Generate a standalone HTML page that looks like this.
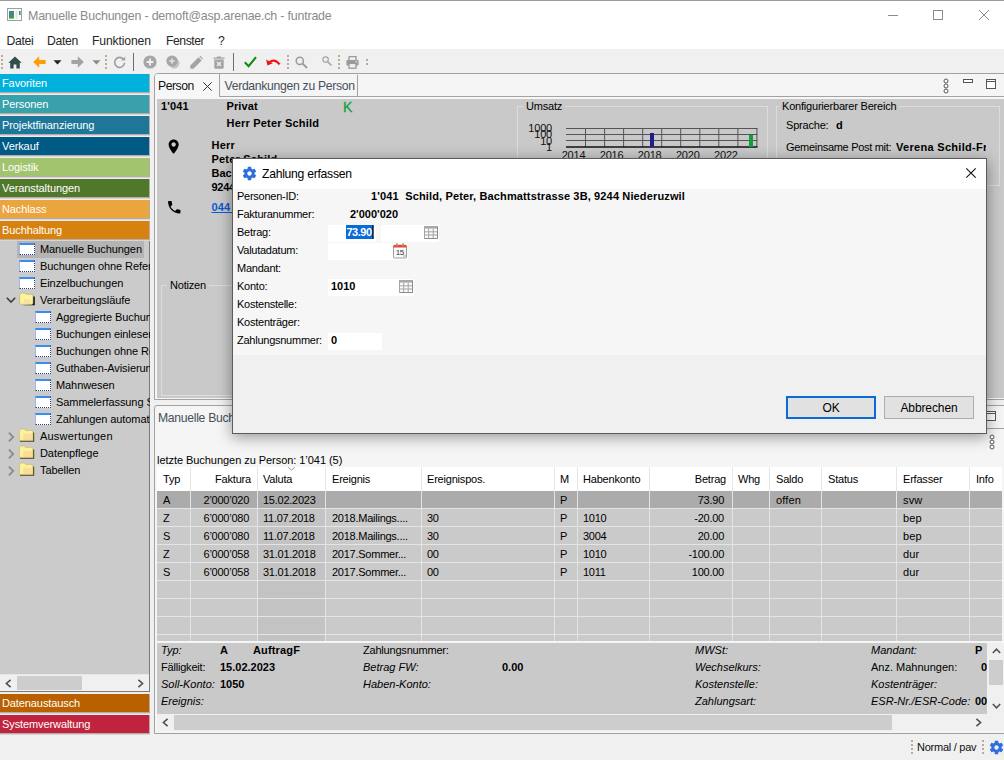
<!DOCTYPE html>
<html lang="de">
<head>
<meta charset="utf-8">
<title>Manuelle Buchungen - demoft@asp.arenae.ch - funtrade</title>
<style>
*{box-sizing:border-box;margin:0;padding:0}
html,body{width:1004px;height:760px;overflow:hidden;background:#f0f0f0}
body{position:relative;font-family:"Liberation Sans",sans-serif;font-size:11px;color:#000;line-height:14px;letter-spacing:-.2px}
.a{position:absolute;white-space:nowrap}
.b{font-weight:bold;letter-spacing:.15px}
.i{font-style:italic;letter-spacing:0}
.i0{letter-spacing:0}
.sg{font-family:"Liberation Sans",sans-serif}
svg{position:absolute;overflow:visible}
#title{left:0;top:0;width:1004px;height:31px;background:#fff;border-top:1px solid #9c9c9c}
#menubar{left:0;top:31px;width:1004px;height:18px;background:#fff}
#toolbar{left:0;top:49px;width:1004px;height:24px;background:#f0f0f0}
#side{left:0;top:73px;width:150px;height:662px;background:#eeeeee;overflow:hidden}
.bar{position:absolute;left:0;width:149px;height:18px;color:#fff;font-size:11px;line-height:14px;padding:2px 0 0 2px;white-space:nowrap;letter-spacing:-.1px}
.barsh{position:absolute;left:0;width:150px;height:3px;border-top:1px solid #b9aca7;background:linear-gradient(#d6d6d6 0,#d6d6d6 1px,#f2ecec 1px,#f2ecec 2px)}
.ti{position:absolute;font-size:11px;white-space:nowrap;height:17px;line-height:17px;letter-spacing:-.08px}
.wi{position:absolute;width:16px;height:12px;background:#fff;border-top:2px solid #3a8cf0;border-left:1px solid #9ab8ea;border-right:1px dotted #2a3a8a;border-bottom:1px dotted #2a3a8a}
.hd{position:absolute;width:2px}
</style>
</head>
<body>
<div id="title" class="a">
<svg style="left:7px;top:7px" width="15" height="13" viewBox="0 0 15 13"><defs><linearGradient id="tg" x1="0" y1="0" x2="0.4" y2="1"><stop offset="0" stop-color="#4a78b4"/><stop offset="1" stop-color="#38a048"/></linearGradient></defs><rect x="0.5" y="0.5" width="14" height="12" fill="#fbfbfb" stroke="#9aa0a8"/><rect x="2" y="3" width="5" height="7.6" fill="url(#tg)"/><rect x="8.6" y="3" width="1.8" height="7.6" fill="#e2e2e2"/><rect x="12" y="3" width="1.6" height="4" fill="url(#tg)"/></svg>
<div class="a sg" style="left:28px;top:7px;font-size:12.4px;line-height:16px;color:#8a8a8a;letter-spacing:-.18px">Manuelle Buchungen - demoft@asp.arenae.ch - funtrade</div>
<svg style="left:888px;top:14px" width="10" height="1"><rect x="0" y="0" width="10" height="1" fill="#8c8c8c"/></svg>
<svg style="left:933px;top:9px" width="10" height="10"><rect x="0.5" y="0.5" width="9" height="9" fill="none" stroke="#8c8c8c"/></svg>
<svg style="left:979px;top:9px" width="10" height="10"><path d="M0 0L10 10M10 0L0 10" stroke="#8c8c8c" stroke-width="1" fill="none"/></svg>
</div>
<div id="menubar" class="a sg" style="font-size:12.2px;line-height:19px;color:#262626;letter-spacing:-.15px">
<span class="a" style="left:6.5px;top:1px;letter-spacing:-.3px">Datei</span><span class="a" style="left:47px;top:1px;letter-spacing:-.3px">Daten</span><span class="a" style="left:92px;top:1px">Funktionen</span><span class="a" style="left:166px;top:1px;letter-spacing:-.45px">Fenster</span><span class="a" style="left:218px;top:1px">?</span>
</div>
<div id="toolbar" class="a"></div><div class="a" style="left:1px;top:55px;width:2px;height:2px;background:#bcab90"></div><div class="a" style="left:1px;top:59px;width:2px;height:2px;background:#bcab90"></div><div class="a" style="left:1px;top:63px;width:2px;height:2px;background:#bcab90"></div><div class="a" style="left:1px;top:67px;width:2px;height:2px;background:#bcab90"></div><div class="a" style="left:105px;top:55px;width:2px;height:2px;background:#bcab90"></div><div class="a" style="left:105px;top:59px;width:2px;height:2px;background:#bcab90"></div><div class="a" style="left:105px;top:63px;width:2px;height:2px;background:#bcab90"></div><div class="a" style="left:105px;top:67px;width:2px;height:2px;background:#bcab90"></div><div class="a" style="left:287px;top:55px;width:2px;height:2px;background:#bcab90"></div><div class="a" style="left:287px;top:59px;width:2px;height:2px;background:#bcab90"></div><div class="a" style="left:287px;top:63px;width:2px;height:2px;background:#bcab90"></div><div class="a" style="left:287px;top:67px;width:2px;height:2px;background:#bcab90"></div><div class="a" style="left:338px;top:55px;width:2px;height:2px;background:#bcab90"></div><div class="a" style="left:338px;top:59px;width:2px;height:2px;background:#bcab90"></div><div class="a" style="left:338px;top:63px;width:2px;height:2px;background:#bcab90"></div><div class="a" style="left:338px;top:67px;width:2px;height:2px;background:#bcab90"></div><div class="a" style="left:366px;top:59px;width:2px;height:2px;background:#bcab90"></div><div class="a" style="left:366px;top:63px;width:2px;height:2px;background:#bcab90"></div>
<svg style="left:8px;top:56px" width="14" height="13" viewBox="0 0 14 13"><path d="M7 0.5L0.3 6.8H2.2V12.5H5.6V8.4H8.4V12.5H11.8V6.8H13.7Z" fill="#2f4f4f"/></svg>
<svg style="left:33px;top:56px" width="13" height="12" viewBox="0 0 13 12"><path d="M6.2 0.3L0.2 6L6.2 11.7V8H12.6V4H6.2Z" fill="#ff9c0a"/></svg>
<svg style="left:53px;top:60px" width="9" height="5" viewBox="0 0 9 5"><path d="M0.5 0.3H8.5L4.5 4.6Z" fill="#222"/></svg>
<svg style="left:71px;top:56px" width="13" height="12" viewBox="0 0 13 12"><path d="M6.8 0.3L12.8 6L6.8 11.7V8H0.4V4H6.8Z" fill="#a3a3a3"/></svg>
<svg style="left:92px;top:60px" width="9" height="5" viewBox="0 0 9 5"><path d="M0.5 0.3H8.5L4.5 4.6Z" fill="#8c8c8c"/></svg>
<svg style="left:113px;top:56px" width="13" height="13" viewBox="0 0 13 13"><path d="M10.6 3.4A5 5 0 1 0 11.6 6.8" fill="none" stroke="#a0a0a0" stroke-width="1.7"/><path d="M8.2 4.6H12.2V0.6Z" fill="#a0a0a0"/></svg>
<div class="a" style="left:133px;top:53px;width:1px;height:18px;background:#6e6e6e"></div>
<svg style="left:143px;top:55px" width="14" height="14" viewBox="0 0 14 14"><circle cx="7" cy="7" r="6.6" fill="#a6a6a6"/><path d="M7 3.6V10.4M3.6 7H10.4" stroke="#f0f0f0" stroke-width="1.8"/></svg>
<svg style="left:166px;top:55px" width="14" height="14" viewBox="0 0 14 14"><circle cx="8.2" cy="8.2" r="5.2" fill="#c4c4c4"/><circle cx="6" cy="6" r="5.6" fill="#a6a6a6"/><path d="M6 3.2V8.8M3.2 6H8.8" stroke="#e4e4e4" stroke-width="1.4"/></svg>
<svg style="left:190px;top:56px" width="13" height="13" viewBox="0 0 13 13"><path d="M0.3 12.7V9.6L8.6 1.3L11.7 4.4L3.4 12.7Z" fill="#a3a3a3"/><path d="M9.5 0.6L10.4 -0.2L13 2.4L12.3 3.4Z" fill="#a3a3a3"/></svg>
<svg style="left:213px;top:56px" width="12" height="13" viewBox="0 0 12 13"><path d="M0.4 1.4H3.6L4.3 0.4H7.7L8.4 1.4H11.6V2.8H0.4Z" fill="#a3a3a3"/><path d="M1.3 3.6H10.7V11.6Q10.7 12.8 9.5 12.8H2.5Q1.3 12.8 1.3 11.6Z" fill="#a3a3a3"/><path d="M4 6L8 10M8 6L4 10" stroke="#f0f0f0" stroke-width="1.3"/></svg>
<div class="a" style="left:233px;top:53px;width:1px;height:18px;background:#6e6e6e"></div>
<svg style="left:244px;top:56px" width="13" height="12" viewBox="0 0 13 12"><path d="M0.8 6.2L4.6 10.2L12 1.2" fill="none" stroke="#0a8a0a" stroke-width="2"/></svg>
<svg style="left:266px;top:58px" width="15" height="9" viewBox="0 0 15 9"><path d="M3.4 4.2Q8.6 0.2 13.6 6.4" fill="none" stroke="#f01414" stroke-width="2.2"/><path d="M0.2 1.6L1.4 7.4L6.8 5.2Z" fill="#f01414"/></svg>
<svg style="left:295px;top:56px" width="13" height="13" viewBox="0 0 13 13"><circle cx="4.8" cy="4.8" r="3.6" fill="none" stroke="#9a9a9a" stroke-width="1.5"/><path d="M7.4 7.4L12 12" stroke="#9a9a9a" stroke-width="1.8"/></svg>
<svg style="left:322px;top:56px" width="10" height="10" viewBox="0 0 10 10"><circle cx="3.6" cy="3.6" r="2.7" fill="none" stroke="#a6a6a6" stroke-width="1.2"/><path d="M5.6 5.6L9.4 9.4" stroke="#a6a6a6" stroke-width="1.5"/></svg>
<svg style="left:346px;top:56px" width="13" height="13" viewBox="0 0 13 13"><path d="M3 0.6H10V4" fill="none" stroke="#9a9a9a" stroke-width="1.4"/><path d="M3 4V0.6" stroke="#9a9a9a" stroke-width="1.4"/><rect x="0.4" y="4" width="12.2" height="5.6" rx="1" fill="#9a9a9a"/><rect x="3" y="7.4" width="7" height="4.8" fill="#f0f0f0" stroke="#9a9a9a" stroke-width="1.3"/><rect x="9.6" y="5.2" width="1.6" height="1.1" fill="#f0f0f0"/></svg>
<div id="side" class="a"><div class="bar" style="top:1px;background:#00b1dd">Favoriten</div><div class="barsh" style="top:19px"></div><div class="a" style="left:149px;top:1px;width:1px;height:18px;background:#b4aca6"></div><div class="bar" style="top:22px;background:#38a1ac">Personen</div><div class="barsh" style="top:40px"></div><div class="a" style="left:149px;top:22px;width:1px;height:18px;background:#b4aca6"></div><div class="bar" style="top:43px;background:#1e7799">Projektfinanzierung</div><div class="barsh" style="top:61px"></div><div class="a" style="left:149px;top:43px;width:1px;height:18px;background:#b4aca6"></div><div class="bar" style="top:64px;background:#005b84">Verkauf</div><div class="barsh" style="top:82px"></div><div class="a" style="left:149px;top:64px;width:1px;height:18px;background:#b4aca6"></div><div class="bar" style="top:85px;background:#a2c46e">Logistik</div><div class="barsh" style="top:103px"></div><div class="a" style="left:149px;top:85px;width:1px;height:18px;background:#b4aca6"></div><div class="bar" style="top:106px;background:#50782a">Veranstaltungen</div><div class="barsh" style="top:124px"></div><div class="a" style="left:149px;top:106px;width:1px;height:18px;background:#b4aca6"></div><div class="bar" style="top:127px;background:#eaa53e">Nachlass</div><div class="barsh" style="top:145px"></div><div class="a" style="left:149px;top:127px;width:1px;height:18px;background:#b4aca6"></div><div class="bar" style="top:148px;background:#d7820f">Buchhaltung</div><div class="barsh" style="top:166px"></div><div class="a" style="left:149px;top:148px;width:1px;height:18px;background:#b4aca6"></div><div class="bar" style="top:621px;background:#b96000">Datenaustausch</div><div class="barsh" style="top:639px"></div><div class="a" style="left:149px;top:621px;width:1px;height:18px;background:#b4aca6"></div><div class="bar" style="top:642px;background:#bf233d">Systemverwaltung</div><div class="barsh" style="top:660px"></div><div class="a" style="left:149px;top:642px;width:1px;height:18px;background:#b4aca6"></div><div class="a" style="left:0;top:168px;width:150px;height:451px;background:#cbcbcb;border-right:1px solid #7c7c7c"></div><div class="a" style="left:17px;top:168px;width:127px;height:17px;background:#b4b4b4"></div><div class="wi" style="left:19px;top:170px"></div><div class="ti" style="left:40px;top:168px">Manuelle Buchungen</div><div class="wi" style="left:19px;top:187px"></div><div class="ti" style="left:40px;top:185px">Buchungen ohne Referenz</div><div class="wi" style="left:19px;top:204px"></div><div class="ti" style="left:40px;top:202px">Einzelbuchungen</div><svg style="left:19px;top:219px" width="17" height="15" viewBox="0 0 17 15"><path d="M3.5 13.2H15.8V4.6H14V12Z" fill="#111"/><path d="M0.6 3.2Q0.6 1.2 2.6 1Q5.4 0.4 7.4 2.2H12.4Q14 2.2 14 4V11Q14 12.4 12.6 12.4H2.4Q0.6 12.4 0.6 10.6Z" fill="#faf29c" stroke="#b8a850" stroke-width=".6"/><path d="M5 7.5H11.5V11.6H4Z" fill="#f6d8a0" opacity=".7"/></svg><svg style="left:6px;top:224px" width="10" height="6" viewBox="0 0 10 6"><path d="M0.8 0.8L5 5L9.2 0.8" fill="none" stroke="#404040" stroke-width="1.6"/></svg><div class="ti" style="left:40px;top:219px">Verarbeitungsläufe</div><div class="wi" style="left:35px;top:238px"></div><div class="ti" style="left:56px;top:236px">Aggregierte Buchungen</div><div class="wi" style="left:35px;top:255px"></div><div class="ti" style="left:56px;top:253px">Buchungen einlesen</div><div class="wi" style="left:35px;top:272px"></div><div class="ti" style="left:56px;top:270px">Buchungen ohne Referenz</div><div class="wi" style="left:35px;top:289px"></div><div class="ti" style="left:56px;top:287px">Guthaben-Avisierung</div><div class="wi" style="left:35px;top:306px"></div><div class="ti" style="left:56px;top:304px">Mahnwesen</div><div class="wi" style="left:35px;top:323px"></div><div class="ti" style="left:56px;top:321px">Sammelerfassung Spenden</div><div class="wi" style="left:35px;top:340px"></div><div class="ti" style="left:56px;top:338px">Zahlungen automatisch</div><svg style="left:19px;top:355px" width="15.4" height="13.6" viewBox="0 0 16 14"><path d="M1 13.5H15.2V4.5" fill="none" stroke="#4a4418" stroke-width="1.2"/><path d="M0.5 3.4Q0.5 1 2.6 1H4.8Q6.4 1 7 2.6H12.8Q14.4 2.6 14.4 4.2V12.8H0.5Z" fill="#fbf39c" stroke="#c8b850" stroke-width=".6"/><rect x="4.5" y="6" width="9" height="6.4" fill="#f8c49c" opacity=".45"/></svg><svg style="left:8px;top:359px" width="7" height="10" viewBox="0 0 7 10"><path d="M0.9 0.7L5.2 5L0.9 9.3" fill="none" stroke="#8c8c8c" stroke-width="1.8"/></svg><div class="ti" style="left:40px;top:355px;letter-spacing:.2px">Auswertungen</div><svg style="left:19px;top:372px" width="15.4" height="13.6" viewBox="0 0 16 14"><path d="M1 13.5H15.2V4.5" fill="none" stroke="#4a4418" stroke-width="1.2"/><path d="M0.5 3.4Q0.5 1 2.6 1H4.8Q6.4 1 7 2.6H12.8Q14.4 2.6 14.4 4.2V12.8H0.5Z" fill="#fbf39c" stroke="#c8b850" stroke-width=".6"/><rect x="4.5" y="6" width="9" height="6.4" fill="#f8c49c" opacity=".45"/></svg><svg style="left:8px;top:376px" width="7" height="10" viewBox="0 0 7 10"><path d="M0.9 0.7L5.2 5L0.9 9.3" fill="none" stroke="#8c8c8c" stroke-width="1.8"/></svg><div class="ti" style="left:40px;top:372px">Datenpflege</div><svg style="left:19px;top:389px" width="15.4" height="13.6" viewBox="0 0 16 14"><path d="M1 13.5H15.2V4.5" fill="none" stroke="#4a4418" stroke-width="1.2"/><path d="M0.5 3.4Q0.5 1 2.6 1H4.8Q6.4 1 7 2.6H12.8Q14.4 2.6 14.4 4.2V12.8H0.5Z" fill="#fbf39c" stroke="#c8b850" stroke-width=".6"/><rect x="4.5" y="6" width="9" height="6.4" fill="#f8c49c" opacity=".45"/></svg><svg style="left:8px;top:393px" width="7" height="10" viewBox="0 0 7 10"><path d="M0.9 0.7L5.2 5L0.9 9.3" fill="none" stroke="#8c8c8c" stroke-width="1.8"/></svg><div class="ti" style="left:40px;top:389px">Tabellen</div><div class="a" style="left:0;top:601px;width:149px;height:1px;background:#e6e6e6"></div>
<div class="a" style="left:0;top:602px;width:149px;height:16px;background:#f0f0f0"></div>
<div class="a" style="left:17px;top:603px;width:65px;height:14px;background:#cdcdcd"></div>
<svg style="left:5px;top:605.5px" width="7" height="9" viewBox="0 0 7 9"><path d="M5.6 0.8L1.4 4.5L5.6 8.2" fill="none" stroke="#505050" stroke-width="1.6"/></svg>
<svg style="left:137px;top:605.5px" width="7" height="9" viewBox="0 0 7 9"><path d="M1.4 0.8L5.6 4.5L1.4 8.2" fill="none" stroke="#505050" stroke-width="1.6"/></svg>
<div class="a" style="left:0;top:618px;width:150px;height:1px;background:#7a7a7a"></div>
</div>
<div class="a" style="left:154px;top:73px;width:860px;height:327px;background:#f5f5f5;border:1px solid #a2a2a2;border-radius:4px 0 0 0"></div>
<div class="a" style="left:219px;top:96px;width:785px;height:1px;background:#a2a2a2"></div>
<div class="a" style="left:155px;top:74px;width:65px;height:24px;background:#f7f7f7;border-right:1px solid #a2a2a2;border-radius:3px 0 0 0"></div>
<div class="a" style="left:155px;top:97px;width:849px;height:2px;background:#f6f6f6"></div>
<div class="a" style="left:155px;top:97px;width:2px;height:302px;background:#f6f6f6"></div>
<div class="a" style="left:357px;top:75px;width:1px;height:21px;background:#a2a2a2"></div>
<div class="a sg" style="left:158px;top:78px;font-size:12.2px;line-height:16px;color:#111;letter-spacing:-.45px">Person</div>
<svg style="left:203px;top:81.5px" width="9" height="9" viewBox="0 0 9 9"><path d="M0.3 0.3L8.7 8.7M8.7 0.3L0.3 8.7" stroke="#333" stroke-width="1" fill="none"/></svg>
<div class="a sg" style="left:224.5px;top:78px;font-size:12.2px;line-height:16px;color:#48505a;letter-spacing:-.3px">Verdankungen zu Person</div>
<svg style="left:942.5px;top:77.5px" width="6" height="16" viewBox="0 0 6 16"><circle cx="3" cy="3" r="2" fill="#fff" stroke="#555" stroke-width="1"/><circle cx="3" cy="8" r="2" fill="#fff" stroke="#555" stroke-width="1"/><circle cx="3" cy="13" r="2" fill="#fff" stroke="#555" stroke-width="1"/></svg>
<svg style="left:963px;top:79px" width="10" height="4"><rect x="0.5" y="0.5" width="9" height="3" fill="#fff" stroke="#555"/></svg>
<svg style="left:986px;top:79px" width="10" height="10"><rect x="0.5" y="0.5" width="9" height="9" fill="#fff" stroke="#555"/><rect x="0.5" y="2" width="9" height="1" fill="#555"/></svg>
<div class="a" style="left:157px;top:99px;width:847px;height:299px;background:#c9c9c9"></div>

<div class="a b" style="left:161px;top:99px">1'041</div>
<div class="a b" style="left:226.5px;top:99px;letter-spacing:.1px">Privat</div>
<div class="a" style="left:343px;top:98px;font-size:14px;line-height:18px;color:#12a040;-webkit-text-stroke:.3px #12a040">K</div>
<div class="a b" style="left:226.5px;top:116px;letter-spacing:.2px">Herr Peter Schild</div>
<svg style="left:165.3px;top:137.7px" width="17.3" height="17.3" viewBox="0 0 24 24"><path fill="#000" d="M12 2C8.13 2 5 5.13 5 9c0 5.25 7 13 7 13s7-7.750 7-13c0-3.870-3.130-7-7-7zm0 10c-1.650 0-3-1.350-3-3s1.350-3 3-3 3 1.350 3 3-1.350 3-3 3z"/></svg>
<div class="a b" style="left:211.5px;top:138px;letter-spacing:.2px">Herr</div>
<div class="a b" style="left:211.5px;top:152px;letter-spacing:.2px">Peter Schild</div>
<div class="a b" style="left:211.5px;top:166px;letter-spacing:0">Bachmattstrasse 3B</div>
<div class="a b" style="left:211.5px;top:180px;letter-spacing:-.25px">9244 Niederuzwil</div>
<svg style="left:165.6px;top:198.6px" width="16.5" height="16.5" viewBox="0 0 24 24"><path fill="#000" d="M6.620 10.790c1.440 2.830 3.760 5.140 6.590 6.590l2.200-2.200c.27-.27.67-.36 1.020-.24 1.120.37 2.330.57 3.570.57.55 0 1 .45 1 1V20c0 .55-.45 1-1 1-9.390 0-17-7.610-17-17 0-.55.45-1 1-1h3.500c.55 0 1 .45 1 1 0 1.250.2 2.450.57 3.570.11.35.03.74-.25 1.020l-2.200 2.200z"/></svg>
<div class="a b" style="left:211.5px;top:200px;color:#0a5ad2;text-decoration:underline">044 555 44 33</div>
<div class="a" style="left:517px;top:106px;width:251px;height:80px;border:1px solid #dcdcdc"></div><div class="a" style="left:523px;top:99px;padding:0 3px;background:#c9c9c9">Umsatz</div><div class="a" style="left:776px;top:106px;width:224px;height:80px;border:1px solid #dcdcdc"></div><div class="a" style="left:779px;top:99px;padding:0 3px;background:#c9c9c9">Konfigurierbarer Bereich</div><div class="a" style="left:161px;top:285px;width:330px;height:111px;border:1px solid #dcdcdc"></div><div class="a" style="left:167px;top:278px;padding:0 3px;background:#c9c9c9">Notizen</div><svg style="left:520px;top:118px" width="250" height="47" viewBox="520 118 250 47" font-family="Liberation Sans, sans-serif" font-size="11"><path d="M566 128.5H757.5" stroke="#555" stroke-width="1"/><path d="M566 134.5H757.5" stroke="#555" stroke-width="1"/><path d="M566 140.5H757.5" stroke="#555" stroke-width="1"/><path d="M585.5 128V147" stroke="#555" stroke-width="1"/><path d="M604.6 128V147" stroke="#555" stroke-width="1"/><path d="M623.6 128V147" stroke="#555" stroke-width="1"/><path d="M642.7 128V147" stroke="#555" stroke-width="1"/><path d="M661.7 128V147" stroke="#555" stroke-width="1"/><path d="M680.7 128V147" stroke="#555" stroke-width="1"/><path d="M699.8 128V147" stroke="#555" stroke-width="1"/><path d="M718.8 128V147" stroke="#555" stroke-width="1"/><path d="M737.9 128V147" stroke="#555" stroke-width="1"/><path d="M756.9 128V147" stroke="#555" stroke-width="1"/><path d="M566 147H757.5" stroke="#111" stroke-width="1.4"/><rect x="650" y="133" width="4" height="14" fill="#1e1e8c"/><rect x="749" y="135" width="4" height="12" fill="#10a040"/><text x="552" y="132" text-anchor="end" fill="#111">1000</text><text x="552" y="138.3" text-anchor="end" fill="#111">100</text><text x="552" y="144.6" text-anchor="end" fill="#111">10</text><text x="552" y="151" text-anchor="end" fill="#111">1</text><text x="573.5" y="158.7" text-anchor="middle" fill="#111">2014</text><text x="611.6" y="158.7" text-anchor="middle" fill="#111">2016</text><text x="649.7" y="158.7" text-anchor="middle" fill="#111">2018</text><text x="687.8" y="158.7" text-anchor="middle" fill="#111">2020</text><text x="725.9" y="158.7" text-anchor="middle" fill="#111">2022</text></svg>
<div class="a" style="left:786px;top:118px">Sprache:</div><div class="a b" style="left:836px;top:118px">d</div>
<div class="a" style="left:786px;top:140px;letter-spacing:-.3px">Gemeinsame Post mit:</div><div class="a b" style="left:896px;top:140px;width:90px;overflow:hidden;letter-spacing:.3px">Verena Schild-Frei</div>

<div class="a" style="left:154px;top:405px;width:860px;height:329px;background:#f5f5f5;border:1px solid #a2a2a2;border-radius:3px 0 0 0"></div>
<div class="a sg" style="left:158px;top:410px;font-size:12.2px;line-height:16px;color:#48505a;letter-spacing:-.3px">Manuelle Buchungen</div>
<div class="a" style="left:270px;top:428px;width:734px;height:1px;background:#a2a2a2"></div><svg style="left:986px;top:411px" width="10" height="10"><rect x="0.5" y="0.5" width="9" height="9" fill="#fff" stroke="#555"/><rect x="0.5" y="2" width="9" height="1" fill="#555"/></svg>
<svg style="left:989px;top:434px" width="6" height="16" viewBox="0 0 6 16"><circle cx="3" cy="3" r="2" fill="#fff" stroke="#555" stroke-width="1"/><circle cx="3" cy="8" r="2" fill="#fff" stroke="#555" stroke-width="1"/><circle cx="3" cy="13" r="2" fill="#fff" stroke="#555" stroke-width="1"/></svg>
<div class="a" style="left:157px;top:453px;letter-spacing:-.05px">letzte Buchungen zu Person: 1’041 (5)</div>
<div class="a" style="left:157px;top:467px;width:845px;height:24px;background:#fff"></div><div class="a" style="left:157px;top:491px;width:845px;height:150px;background:#e4e4e4;overflow:hidden"><div class="a" style="left:0px;top:0px;width:33px;height:17px;background:#ababab"></div><div class="a" style="left:34px;top:0px;width:66px;height:17px;background:#ababab"></div><div class="a" style="left:101px;top:0px;width:67px;height:17px;background:#ababab"></div><div class="a" style="left:169px;top:0px;width:95px;height:17px;background:#ababab"></div><div class="a" style="left:265px;top:0px;width:132px;height:17px;background:#ababab"></div><div class="a" style="left:398px;top:0px;width:22px;height:17px;background:#ababab"></div><div class="a" style="left:421px;top:0px;width:71px;height:17px;background:#ababab"></div><div class="a" style="left:493px;top:0px;width:82px;height:17px;background:#ababab"></div><div class="a" style="left:576px;top:0px;width:36px;height:17px;background:#ababab"></div><div class="a" style="left:613px;top:0px;width:51px;height:17px;background:#ababab"></div><div class="a" style="left:665px;top:0px;width:74px;height:17px;background:#ababab"></div><div class="a" style="left:740px;top:0px;width:72px;height:17px;background:#ababab"></div><div class="a" style="left:813px;top:0px;width:32px;height:17px;background:#ababab"></div><div class="a" style="left:0px;top:18px;width:33px;height:17px;background:#cacaca"></div><div class="a" style="left:34px;top:18px;width:66px;height:17px;background:#cacaca"></div><div class="a" style="left:101px;top:18px;width:67px;height:17px;background:#c3c3c3"></div><div class="a" style="left:169px;top:18px;width:95px;height:17px;background:#cacaca"></div><div class="a" style="left:265px;top:18px;width:132px;height:17px;background:#cacaca"></div><div class="a" style="left:398px;top:18px;width:22px;height:17px;background:#cacaca"></div><div class="a" style="left:421px;top:18px;width:71px;height:17px;background:#cacaca"></div><div class="a" style="left:493px;top:18px;width:82px;height:17px;background:#cacaca"></div><div class="a" style="left:576px;top:18px;width:36px;height:17px;background:#cacaca"></div><div class="a" style="left:613px;top:18px;width:51px;height:17px;background:#cacaca"></div><div class="a" style="left:665px;top:18px;width:74px;height:17px;background:#cacaca"></div><div class="a" style="left:740px;top:18px;width:72px;height:17px;background:#cacaca"></div><div class="a" style="left:813px;top:18px;width:32px;height:17px;background:#cacaca"></div><div class="a" style="left:0px;top:36px;width:33px;height:17px;background:#cacaca"></div><div class="a" style="left:34px;top:36px;width:66px;height:17px;background:#cacaca"></div><div class="a" style="left:101px;top:36px;width:67px;height:17px;background:#c3c3c3"></div><div class="a" style="left:169px;top:36px;width:95px;height:17px;background:#cacaca"></div><div class="a" style="left:265px;top:36px;width:132px;height:17px;background:#cacaca"></div><div class="a" style="left:398px;top:36px;width:22px;height:17px;background:#cacaca"></div><div class="a" style="left:421px;top:36px;width:71px;height:17px;background:#cacaca"></div><div class="a" style="left:493px;top:36px;width:82px;height:17px;background:#cacaca"></div><div class="a" style="left:576px;top:36px;width:36px;height:17px;background:#cacaca"></div><div class="a" style="left:613px;top:36px;width:51px;height:17px;background:#cacaca"></div><div class="a" style="left:665px;top:36px;width:74px;height:17px;background:#cacaca"></div><div class="a" style="left:740px;top:36px;width:72px;height:17px;background:#cacaca"></div><div class="a" style="left:813px;top:36px;width:32px;height:17px;background:#cacaca"></div><div class="a" style="left:0px;top:54px;width:33px;height:17px;background:#cacaca"></div><div class="a" style="left:34px;top:54px;width:66px;height:17px;background:#cacaca"></div><div class="a" style="left:101px;top:54px;width:67px;height:17px;background:#c3c3c3"></div><div class="a" style="left:169px;top:54px;width:95px;height:17px;background:#cacaca"></div><div class="a" style="left:265px;top:54px;width:132px;height:17px;background:#cacaca"></div><div class="a" style="left:398px;top:54px;width:22px;height:17px;background:#cacaca"></div><div class="a" style="left:421px;top:54px;width:71px;height:17px;background:#cacaca"></div><div class="a" style="left:493px;top:54px;width:82px;height:17px;background:#cacaca"></div><div class="a" style="left:576px;top:54px;width:36px;height:17px;background:#cacaca"></div><div class="a" style="left:613px;top:54px;width:51px;height:17px;background:#cacaca"></div><div class="a" style="left:665px;top:54px;width:74px;height:17px;background:#cacaca"></div><div class="a" style="left:740px;top:54px;width:72px;height:17px;background:#cacaca"></div><div class="a" style="left:813px;top:54px;width:32px;height:17px;background:#cacaca"></div><div class="a" style="left:0px;top:72px;width:33px;height:17px;background:#cacaca"></div><div class="a" style="left:34px;top:72px;width:66px;height:17px;background:#cacaca"></div><div class="a" style="left:101px;top:72px;width:67px;height:17px;background:#c3c3c3"></div><div class="a" style="left:169px;top:72px;width:95px;height:17px;background:#cacaca"></div><div class="a" style="left:265px;top:72px;width:132px;height:17px;background:#cacaca"></div><div class="a" style="left:398px;top:72px;width:22px;height:17px;background:#cacaca"></div><div class="a" style="left:421px;top:72px;width:71px;height:17px;background:#cacaca"></div><div class="a" style="left:493px;top:72px;width:82px;height:17px;background:#cacaca"></div><div class="a" style="left:576px;top:72px;width:36px;height:17px;background:#cacaca"></div><div class="a" style="left:613px;top:72px;width:51px;height:17px;background:#cacaca"></div><div class="a" style="left:665px;top:72px;width:74px;height:17px;background:#cacaca"></div><div class="a" style="left:740px;top:72px;width:72px;height:17px;background:#cacaca"></div><div class="a" style="left:813px;top:72px;width:32px;height:17px;background:#cacaca"></div><div class="a" style="left:0px;top:90px;width:33px;height:17px;background:#cacaca"></div><div class="a" style="left:34px;top:90px;width:66px;height:17px;background:#cacaca"></div><div class="a" style="left:101px;top:90px;width:67px;height:17px;background:#c3c3c3"></div><div class="a" style="left:169px;top:90px;width:95px;height:17px;background:#cacaca"></div><div class="a" style="left:265px;top:90px;width:132px;height:17px;background:#cacaca"></div><div class="a" style="left:398px;top:90px;width:22px;height:17px;background:#cacaca"></div><div class="a" style="left:421px;top:90px;width:71px;height:17px;background:#cacaca"></div><div class="a" style="left:493px;top:90px;width:82px;height:17px;background:#cacaca"></div><div class="a" style="left:576px;top:90px;width:36px;height:17px;background:#cacaca"></div><div class="a" style="left:613px;top:90px;width:51px;height:17px;background:#cacaca"></div><div class="a" style="left:665px;top:90px;width:74px;height:17px;background:#cacaca"></div><div class="a" style="left:740px;top:90px;width:72px;height:17px;background:#cacaca"></div><div class="a" style="left:813px;top:90px;width:32px;height:17px;background:#cacaca"></div><div class="a" style="left:0px;top:108px;width:33px;height:17px;background:#cacaca"></div><div class="a" style="left:34px;top:108px;width:66px;height:17px;background:#cacaca"></div><div class="a" style="left:101px;top:108px;width:67px;height:17px;background:#c3c3c3"></div><div class="a" style="left:169px;top:108px;width:95px;height:17px;background:#cacaca"></div><div class="a" style="left:265px;top:108px;width:132px;height:17px;background:#cacaca"></div><div class="a" style="left:398px;top:108px;width:22px;height:17px;background:#cacaca"></div><div class="a" style="left:421px;top:108px;width:71px;height:17px;background:#cacaca"></div><div class="a" style="left:493px;top:108px;width:82px;height:17px;background:#cacaca"></div><div class="a" style="left:576px;top:108px;width:36px;height:17px;background:#cacaca"></div><div class="a" style="left:613px;top:108px;width:51px;height:17px;background:#cacaca"></div><div class="a" style="left:665px;top:108px;width:74px;height:17px;background:#cacaca"></div><div class="a" style="left:740px;top:108px;width:72px;height:17px;background:#cacaca"></div><div class="a" style="left:813px;top:108px;width:32px;height:17px;background:#cacaca"></div><div class="a" style="left:0px;top:126px;width:33px;height:17px;background:#cacaca"></div><div class="a" style="left:34px;top:126px;width:66px;height:17px;background:#cacaca"></div><div class="a" style="left:101px;top:126px;width:67px;height:17px;background:#c3c3c3"></div><div class="a" style="left:169px;top:126px;width:95px;height:17px;background:#cacaca"></div><div class="a" style="left:265px;top:126px;width:132px;height:17px;background:#cacaca"></div><div class="a" style="left:398px;top:126px;width:22px;height:17px;background:#cacaca"></div><div class="a" style="left:421px;top:126px;width:71px;height:17px;background:#cacaca"></div><div class="a" style="left:493px;top:126px;width:82px;height:17px;background:#cacaca"></div><div class="a" style="left:576px;top:126px;width:36px;height:17px;background:#cacaca"></div><div class="a" style="left:613px;top:126px;width:51px;height:17px;background:#cacaca"></div><div class="a" style="left:665px;top:126px;width:74px;height:17px;background:#cacaca"></div><div class="a" style="left:740px;top:126px;width:72px;height:17px;background:#cacaca"></div><div class="a" style="left:813px;top:126px;width:32px;height:17px;background:#cacaca"></div><div class="a" style="left:0px;top:144px;width:33px;height:17px;background:#cacaca"></div><div class="a" style="left:34px;top:144px;width:66px;height:17px;background:#cacaca"></div><div class="a" style="left:101px;top:144px;width:67px;height:17px;background:#c3c3c3"></div><div class="a" style="left:169px;top:144px;width:95px;height:17px;background:#cacaca"></div><div class="a" style="left:265px;top:144px;width:132px;height:17px;background:#cacaca"></div><div class="a" style="left:398px;top:144px;width:22px;height:17px;background:#cacaca"></div><div class="a" style="left:421px;top:144px;width:71px;height:17px;background:#cacaca"></div><div class="a" style="left:493px;top:144px;width:82px;height:17px;background:#cacaca"></div><div class="a" style="left:576px;top:144px;width:36px;height:17px;background:#cacaca"></div><div class="a" style="left:613px;top:144px;width:51px;height:17px;background:#cacaca"></div><div class="a" style="left:665px;top:144px;width:74px;height:17px;background:#cacaca"></div><div class="a" style="left:740px;top:144px;width:72px;height:17px;background:#cacaca"></div><div class="a" style="left:813px;top:144px;width:32px;height:17px;background:#cacaca"></div></div><div class="a" style="left:163px;top:472px">Typ</div><div class="a" style="left:190px;top:467px;width:1px;height:24px;background:#e6e6e6"></div><div class="a" style="left:191px;width:60px;text-align:right;top:472px">Faktura</div><div class="a" style="left:257px;top:467px;width:1px;height:24px;background:#e6e6e6"></div><div class="a" style="left:263px;top:472px">Valuta</div><div class="a" style="left:325px;top:467px;width:1px;height:24px;background:#e6e6e6"></div><div class="a" style="left:332px;top:472px">Ereignis</div><div class="a" style="left:421px;top:467px;width:1px;height:24px;background:#e6e6e6"></div><div class="a" style="left:427px;top:472px">Ereignispos.</div><div class="a" style="left:554px;top:467px;width:1px;height:24px;background:#e6e6e6"></div><div class="a" style="left:560px;top:472px">M</div><div class="a" style="left:577px;top:467px;width:1px;height:24px;background:#e6e6e6"></div><div class="a" style="left:583px;top:472px">Habenkonto</div><div class="a" style="left:649px;top:467px;width:1px;height:24px;background:#e6e6e6"></div><div class="a" style="left:650px;width:76px;text-align:right;top:472px">Betrag</div><div class="a" style="left:732px;top:467px;width:1px;height:24px;background:#e6e6e6"></div><div class="a" style="left:738px;top:472px">Whg</div><div class="a" style="left:769px;top:467px;width:1px;height:24px;background:#e6e6e6"></div><div class="a" style="left:776px;top:472px">Saldo</div><div class="a" style="left:821px;top:467px;width:1px;height:24px;background:#e6e6e6"></div><div class="a" style="left:828px;top:472px">Status</div><div class="a" style="left:896px;top:467px;width:1px;height:24px;background:#e6e6e6"></div><div class="a" style="left:903px;top:472px">Erfasser</div><div class="a" style="left:969px;top:467px;width:1px;height:24px;background:#e6e6e6"></div><div class="a" style="left:976px;top:472px">Info</div><div class="a" style="left:163px;top:493px;letter-spacing:.15px">A</div><div class="a" style="left:191px;width:58px;text-align:right;top:493px;letter-spacing:-.25px">2’000’020</div><div class="a" style="left:263px;top:493px;letter-spacing:-.25px">15.02.2023</div><div class="a" style="left:560px;top:493px;letter-spacing:.15px">P</div><div class="a" style="left:650px;width:74px;text-align:right;top:493px;letter-spacing:-.25px">73.90</div><div class="a" style="left:776px;top:493px;letter-spacing:.15px">offen</div><div class="a" style="left:903px;top:493px;letter-spacing:.15px">svw</div><div class="a" style="left:163px;top:511px;letter-spacing:.15px">Z</div><div class="a" style="left:191px;width:58px;text-align:right;top:511px;letter-spacing:-.25px">6’000’080</div><div class="a" style="left:263px;top:511px;letter-spacing:-.25px">11.07.2018</div><div class="a" style="left:332px;top:511px;letter-spacing:-.25px">2018.Mailings....</div><div class="a" style="left:427px;top:511px;letter-spacing:-.25px">30</div><div class="a" style="left:560px;top:511px;letter-spacing:.15px">P</div><div class="a" style="left:583px;top:511px;letter-spacing:-.25px">1010</div><div class="a" style="left:650px;width:74px;text-align:right;top:511px;letter-spacing:-.25px">-20.00</div><div class="a" style="left:903px;top:511px;letter-spacing:.15px">bep</div><div class="a" style="left:163px;top:529px;letter-spacing:.15px">S</div><div class="a" style="left:191px;width:58px;text-align:right;top:529px;letter-spacing:-.25px">6’000’080</div><div class="a" style="left:263px;top:529px;letter-spacing:-.25px">11.07.2018</div><div class="a" style="left:332px;top:529px;letter-spacing:-.25px">2018.Mailings....</div><div class="a" style="left:427px;top:529px;letter-spacing:-.25px">30</div><div class="a" style="left:560px;top:529px;letter-spacing:.15px">P</div><div class="a" style="left:583px;top:529px;letter-spacing:-.25px">3004</div><div class="a" style="left:650px;width:74px;text-align:right;top:529px;letter-spacing:-.25px">20.00</div><div class="a" style="left:903px;top:529px;letter-spacing:.15px">bep</div><div class="a" style="left:163px;top:547px;letter-spacing:.15px">Z</div><div class="a" style="left:191px;width:58px;text-align:right;top:547px;letter-spacing:-.25px">6’000’058</div><div class="a" style="left:263px;top:547px;letter-spacing:-.25px">31.01.2018</div><div class="a" style="left:332px;top:547px;letter-spacing:-.25px">2017.Sommer...</div><div class="a" style="left:427px;top:547px;letter-spacing:-.25px">00</div><div class="a" style="left:560px;top:547px;letter-spacing:.15px">P</div><div class="a" style="left:583px;top:547px;letter-spacing:-.25px">1010</div><div class="a" style="left:650px;width:74px;text-align:right;top:547px;letter-spacing:-.25px">-100.00</div><div class="a" style="left:903px;top:547px;letter-spacing:.15px">dur</div><div class="a" style="left:163px;top:565px;letter-spacing:.15px">S</div><div class="a" style="left:191px;width:58px;text-align:right;top:565px;letter-spacing:-.25px">6’000’058</div><div class="a" style="left:263px;top:565px;letter-spacing:-.25px">31.01.2018</div><div class="a" style="left:332px;top:565px;letter-spacing:-.25px">2017.Sommer...</div><div class="a" style="left:427px;top:565px;letter-spacing:-.25px">00</div><div class="a" style="left:560px;top:565px;letter-spacing:.15px">P</div><div class="a" style="left:583px;top:565px;letter-spacing:-.25px">1011</div><div class="a" style="left:650px;width:74px;text-align:right;top:565px;letter-spacing:-.25px">100.00</div><div class="a" style="left:903px;top:565px;letter-spacing:.15px">dur</div><svg style="left:288px;top:467px" width="7" height="4" viewBox="0 0 7 4"><path d="M0.3 0.3L3.5 3.2L6.7 0.3" fill="none" stroke="#8a8a8a" stroke-width=".9"/></svg><div class="a" style="left:157px;top:643px;width:830px;height:71px;background:#c9c9c9"></div><div class="a i" style="left:161px;top:643px">Typ:</div><div class="a b" style="left:220px;top:643px">A</div><div class="a b" style="left:253px;top:643px">AuftragF</div><div class="a " style="left:161px;top:660px">Fälligkeit:</div><div class="a b" style="left:220px;top:660px;letter-spacing:0">15.02.2023</div><div class="a i" style="left:161px;top:677px">Soll-Konto:</div><div class="a b" style="left:220px;top:677px;letter-spacing:0">1050</div><div class="a i" style="left:161px;top:694px">Ereignis:</div><div class="a " style="left:363px;top:643px">Zahlungsnummer:</div><div class="a i" style="left:363px;top:660px">Betrag FW:</div><div class="a b" style="left:502px;top:660px;letter-spacing:0">0.00</div><div class="a i" style="left:363px;top:677px">Haben-Konto:</div><div class="a i" style="left:695px;top:643px">MWSt:</div><div class="a i" style="left:695px;top:660px">Wechselkurs:</div><div class="a i" style="left:695px;top:677px">Kostenstelle:</div><div class="a i" style="left:695px;top:694px">Zahlungsart:</div><div class="a i" style="left:871px;top:643px">Mandant:</div><div class="a b" style="left:975px;top:643px">P</div><div class="a i0" style="left:871px;top:660px">Anz. Mahnungen:</div><div class="a b" style="left:981px;top:660px;letter-spacing:0">0</div><div class="a i" style="left:871px;top:677px">Kostenträger:</div><div class="a i" style="left:871px;top:694px">ESR-Nr./ESR-Code:</div><div class="a b" style="left:975px;top:694px;letter-spacing:0">00</div><div class="a" style="left:987px;top:643px;width:17px;height:71px;background:#f0f0f0"></div>
<div class="a" style="left:989px;top:660px;width:14px;height:25px;background:#cdcdcd"></div>
<svg style="left:992px;top:648px" width="9" height="6" viewBox="0 0 9 6"><path d="M0.8 5L4.5 1.2L8.2 5" fill="none" stroke="#505050" stroke-width="1.5"/></svg>
<svg style="left:992px;top:703px" width="9" height="6" viewBox="0 0 9 6"><path d="M0.8 1L4.5 4.8L8.2 1" fill="none" stroke="#505050" stroke-width="1.5"/></svg>
<div class="a" style="left:157px;top:714px;width:847px;height:17px;background:#f0f0f0"></div>
<div class="a" style="left:174px;top:715px;width:718px;height:15px;background:#cdcdcd"></div>
<svg style="left:162px;top:718px" width="7" height="9" viewBox="0 0 7 9"><path d="M5.6 0.8L1.4 4.5L5.6 8.2" fill="none" stroke="#505050" stroke-width="1.6"/></svg>
<svg style="left:975px;top:718px" width="7" height="9" viewBox="0 0 7 9"><path d="M1.4 0.8L5.6 4.5L1.4 8.2" fill="none" stroke="#505050" stroke-width="1.6"/></svg>

<div class="a" style="left:232px;top:158px;width:755px;height:276px;background:#f0f0f0;border:1px solid #5c5c5c;box-shadow:0 3px 14px rgba(0,0,0,.4)"></div>
<div class="a" style="left:233px;top:159px;width:753px;height:30px;background:#fff"></div>
<div class="a" style="left:233px;top:189px;width:753px;height:166px;background:#f6f6f6"></div>
<svg style="left:240.5px;top:164.5px" width="17" height="17" viewBox="0 0 24 24"><path fill="#2f6fdb" d="M19.14 12.94c.04-.3.06-.61.06-.94 0-.32-.02-.64-.07-.94l2.03-1.58a.49.49 0 0 0 .12-.61l-1.92-3.32a.488.488 0 0 0-.59-.22l-2.39.96c-.5-.38-1.03-.7-1.62-.94l-.36-2.54a.484.484 0 0 0-.48-.41h-3.84c-.24 0-.43.17-.47.41l-.36 2.54c-.59.24-1.13.57-1.62.94l-2.39-.96c-.22-.08-.47 0-.59.22L2.74 8.87c-.12.21-.08.47.12.61l2.03 1.58c-.05.3-.09.63-.09.94s.02.64.07.94l-2.03 1.58a.49.49 0 0 0-.12.61l1.92 3.32c.12.22.37.29.59.22l2.39-.96c.5.38 1.03.7 1.62.94l.36 2.54c.05.24.24.41.48.41h3.84c.24 0 .44-.17.47-.41l.36-2.54c.59-.24 1.13-.56 1.62-.94l2.39.96c.22.08.47 0 .59-.22l1.92-3.32c.12-.22.07-.47-.12-.61l-2.01-1.58zM12 15.1c-1.7 0-3.1-1.4-3.1-3.1s1.4-3.1 3.1-3.1 3.1 1.4 3.1 3.1-1.4 3.1-3.1 3.1z"/></svg>
<div class="a sg" style="left:262px;top:166px;font-size:12.2px;line-height:16px;color:#000;letter-spacing:-.28px">Zahlung erfassen</div>
<svg style="left:966px;top:168px" width="10" height="10" viewBox="0 0 10 10"><path d="M0.3 0.3L9.7 9.7M9.7 0.3L0.3 9.7" stroke="#111" stroke-width="1.1" fill="none"/></svg>
<div class="a" style="left:237px;top:189px;letter-spacing:-.25px">Personen-ID:</div><div class="a" style="left:237px;top:207px;letter-spacing:-.25px">Fakturanummer:</div><div class="a" style="left:237px;top:225px;letter-spacing:-.25px">Betrag:</div><div class="a" style="left:237px;top:243px;letter-spacing:-.25px">Valutadatum:</div><div class="a" style="left:237px;top:261px;letter-spacing:-.25px">Mandant:</div><div class="a" style="left:237px;top:279px;letter-spacing:-.25px">Konto:</div><div class="a" style="left:237px;top:297px;letter-spacing:-.25px">Kostenstelle:</div><div class="a" style="left:237px;top:315px;letter-spacing:-.25px">Kostenträger:</div><div class="a" style="left:237px;top:333px;letter-spacing:-.25px">Zahlungsnummer:</div>
<div class="a b" style="left:371px;top:189px;letter-spacing:.14px">1'041&nbsp; Schild, Peter, Bachmattstrasse 3B, 9244 Niederuzwil</div>
<div class="a b" style="left:350px;top:207px;letter-spacing:0">2'000'020</div>
<div class="a" style="left:328px;top:225px;width:48px;height:17px;background:#fff"></div>
<div class="a" style="left:381px;top:225px;width:58px;height:17px;background:#fff"></div>
<div class="a" style="left:346px;top:225px;width:28px;height:14px;background:#0a6ad8"></div>
<div class="a b" style="left:346.5px;top:225px;color:#fff;letter-spacing:-.5px">73.90</div>
<div class="a" style="left:372px;top:225px;width:1px;height:14px;background:#402000"></div>
<div class="a" style="left:328px;top:243px;width:80px;height:17px;background:#fff"></div>
<div class="a" style="left:328px;top:279px;width:86px;height:17px;background:#fff"></div>
<div class="a b" style="left:331px;top:279px;letter-spacing:0">1010</div>
<div class="a" style="left:328px;top:333px;width:54px;height:17px;background:#fff"></div>
<div class="a b" style="left:331px;top:333px">0</div>
<svg style="left:424px;top:226px" width="14" height="13" viewBox="0 0 14 13"><rect x="0.5" y="0.5" width="13" height="12" fill="#fafafa" stroke="#a4a4a4"/><rect x="0" y="0" width="14" height="2.6" fill="#a8a8a8"/><path d="M1 5.8H13M1 9H13M4.7 2.6V12M9.2 2.6V12" stroke="#a4a4a4" stroke-width="1"/><path d="M13.5 1V12.5H1" fill="none" stroke="#8c8c8c" stroke-width="1"/></svg><svg style="left:399px;top:280px" width="14" height="13" viewBox="0 0 14 13"><rect x="0.5" y="0.5" width="13" height="12" fill="#fafafa" stroke="#a4a4a4"/><rect x="0" y="0" width="14" height="2.6" fill="#a8a8a8"/><path d="M1 5.8H13M1 9H13M4.7 2.6V12M9.2 2.6V12" stroke="#a4a4a4" stroke-width="1"/><path d="M13.5 1V12.5H1" fill="none" stroke="#8c8c8c" stroke-width="1"/></svg><svg style="left:393px;top:243px" width="14" height="16" viewBox="0 0 14 16"><rect x="0.5" y="2.5" width="13" height="12.5" rx="1" fill="#fbfbfb" stroke="#a0a0a0"/><path d="M0.5 3Q0.5 1.8 1.8 1.8H12.2Q13.5 1.8 13.5 3V4.4H0.5Z" fill="#f0462c"/><rect x="3" y="0.2" width="1.8" height="3" rx=".6" fill="#8aa0b8"/><rect x="9.2" y="0.2" width="1.8" height="3" rx=".6" fill="#8aa0b8"/><rect x="10" y="11.5" width="3" height="3" fill="#d0d0d0"/><text x="6.8" y="12.4" font-size="8" font-family="Liberation Sans, sans-serif" text-anchor="middle" fill="#333" letter-spacing="-.3">15</text></svg>
<div class="a sg" style="left:786px;top:396px;width:90px;height:23px;background:#e1e1e1;border:2px solid #0a6ad8;text-align:center;font-size:12px;line-height:21px;letter-spacing:-.1px">OK</div>
<div class="a sg" style="left:884px;top:396px;width:90px;height:23px;background:#e1e1e1;border:1px solid #adadad;text-align:center;font-size:12px;line-height:23px;letter-spacing:-.1px">Abbrechen</div>

<div class="a" style="left:917px;top:740px;letter-spacing:-.25px;color:#111">Normal / pav</div>
<div class="a" style="left:911px;top:740px;width:2px;height:2px;background:#bcab90"></div><div class="a" style="left:911px;top:744px;width:2px;height:2px;background:#bcab90"></div><div class="a" style="left:911px;top:748px;width:2px;height:2px;background:#bcab90"></div><div class="a" style="left:911px;top:752px;width:2px;height:2px;background:#bcab90"></div><div class="a" style="left:982px;top:740px;width:2px;height:2px;background:#bcab90"></div><div class="a" style="left:982px;top:744px;width:2px;height:2px;background:#bcab90"></div><div class="a" style="left:982px;top:748px;width:2px;height:2px;background:#bcab90"></div><div class="a" style="left:982px;top:752px;width:2px;height:2px;background:#bcab90"></div><svg style="left:988px;top:738.5px" width="17" height="17" viewBox="0 0 24 24"><path fill="#2f6fdb" d="M19.14 12.94c.04-.3.06-.61.06-.94 0-.32-.02-.64-.07-.94l2.03-1.58a.49.49 0 0 0 .12-.61l-1.92-3.32a.488.488 0 0 0-.59-.22l-2.39.96c-.5-.38-1.03-.7-1.62-.94l-.36-2.54a.484.484 0 0 0-.48-.41h-3.84c-.24 0-.43.17-.47.41l-.36 2.54c-.59.24-1.13.57-1.62.94l-2.39-.96c-.22-.08-.47 0-.59.22L2.74 8.87c-.12.21-.08.47.12.61l2.03 1.58c-.05.3-.09.63-.09.94s.02.64.07.94l-2.03 1.58a.49.49 0 0 0-.12.61l1.92 3.32c.12.22.37.29.59.22l2.39-.96c.5.38 1.03.7 1.62.94l.36 2.54c.05.24.24.41.48.41h3.84c.24 0 .44-.17.47-.41l.36-2.54c.59-.24 1.13-.56 1.62-.94l2.39.96c.22.08.47 0 .59-.22l1.92-3.32c.12-.22.07-.47-.12-.61l-2.01-1.58zM12 15.1c-1.7 0-3.1-1.4-3.1-3.1s1.4-3.1 3.1-3.1 3.1 1.4 3.1 3.1-1.4 3.1-3.1 3.1z"/></svg></body>
</html>
